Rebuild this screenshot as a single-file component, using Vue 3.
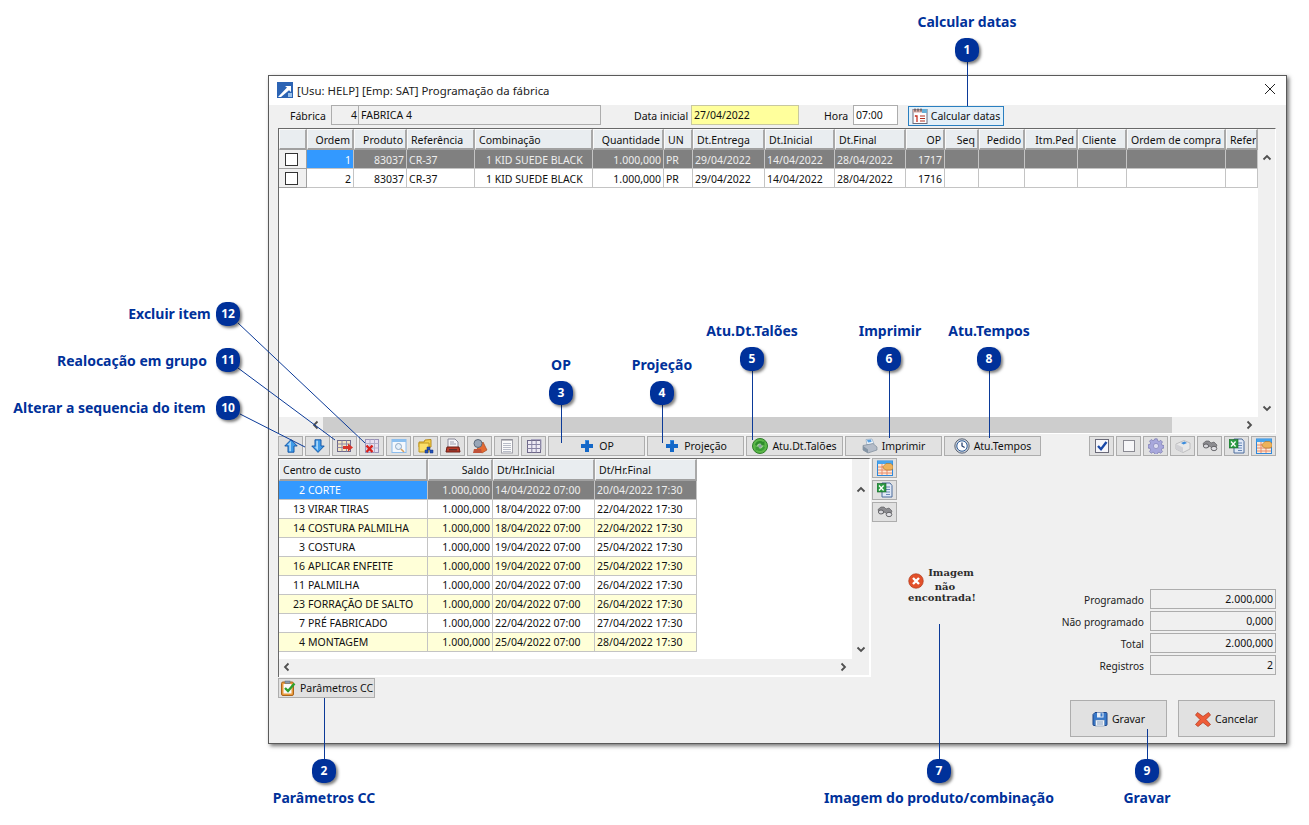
<script setup>
const callouts = [
  { n: 1, x: 967, y: 50 }, { n: 2, x: 324, y: 771 }, { n: 3, x: 561, y: 393 }, { n: 4, x: 662, y: 393 },
  { n: 5, x: 752, y: 359 }, { n: 6, x: 889, y: 359 }, { n: 7, x: 939, y: 771 }, { n: 8, x: 989, y: 359 },
  { n: 9, x: 1147, y: 771 }, { n: 10, x: 228, y: 408 }, { n: 11, x: 228, y: 360 }, { n: 12, x: 228, y: 314 }
]
const labels = [
  { t: 'Calcular datas', x: 967, y: 22 }, { t: 'Parâmetros CC', x: 324, y: 798 }, { t: 'OP', x: 561, y: 365 },
  { t: 'Projeção', x: 662, y: 365 }, { t: 'Atu.Dt.Talões', x: 752, y: 331 }, { t: 'Imprimir', x: 890, y: 331 },
  { t: 'Atu.Tempos', x: 989, y: 331 }, { t: 'Imagem do produto/combinação', x: 939, y: 798 }, { t: 'Gravar', x: 1147, y: 798 },
  { t: 'Alterar a sequencia do item', x: 109.5, y: 408 }, { t: 'Realocação em grupo', x: 132, y: 361 }, { t: 'Excluir item', x: 169.5, y: 314 }
]
const lines = [
  [967.5, 62, 967.5, 106], [324.5, 698, 324.5, 760], [561.5, 405, 561.5, 443], [662.5, 405, 662.5, 443],
  [752.5, 371, 752.5, 440], [889.5, 371, 889.5, 438], [989.5, 371, 989.5, 438], [939.5, 624, 939.5, 760],
  [1147.5, 729, 1147.5, 760], [240, 414, 305, 447], [238, 368, 335, 440], [238, 323, 365, 443]
]
const topCols = [
  { t: 'Ordem', w: 47, r: 1 }, { t: 'Produto', w: 53, r: 1 }, { t: 'Referência', w: 68 }, { t: 'Combinação', w: 118 },
  { t: 'Quantidade', w: 71, r: 1 }, { t: 'UN', w: 29 }, { t: 'Dt.Entrega', w: 72 }, { t: 'Dt.Inicial', w: 70 },
  { t: 'Dt.Final', w: 71 }, { t: 'OP', w: 39, r: 1 }, { t: 'Seq', w: 34, r: 1 }, { t: 'Pedido', w: 46, r: 1 },
  { t: 'Itm.Ped', w: 53, r: 1 }, { t: 'Cliente', w: 49 }, { t: 'Ordem de compra', w: 99 }, { t: 'Referência', w: 32 }
]
const topRows = [
  ['1', '83037', 'CR-37', '1 KID SUEDE BLACK', '1.000,000', 'PR', '29/04/2022', '14/04/2022', '28/04/2022', '1717', '', '', '', '', '', ''],
  ['2', '83037', 'CR-37', '1 KID SUEDE BLACK', '1.000,000', 'PR', '29/04/2022', '14/04/2022', '28/04/2022', '1716', '', '', '', '', '', '']
]
const lowCols = [
  { t: 'Centro de custo', w: 149 }, { t: 'Saldo', w: 65, r: 1 }, { t: 'Dt/Hr.Inicial', w: 102 }, { t: 'Dt/Hr.Final', w: 102 }
]
const lowRows = [
  ['2', 'CORTE', '14/04/2022 07:00', '20/04/2022 17:30'],
  ['13', 'VIRAR TIRAS', '18/04/2022 07:00', '22/04/2022 17:30'],
  ['14', 'COSTURA PALMILHA', '18/04/2022 07:00', '22/04/2022 17:30'],
  ['3', 'COSTURA', '19/04/2022 07:00', '25/04/2022 17:30'],
  ['16', 'APLICAR ENFEITE', '19/04/2022 07:00', '25/04/2022 17:30'],
  ['11', 'PALMILHA', '20/04/2022 07:00', '26/04/2022 17:30'],
  ['23', 'FORRAÇÃO DE SALTO', '20/04/2022 07:00', '26/04/2022 17:30'],
  ['7', 'PRÉ FABRICADO', '22/04/2022 07:00', '27/04/2022 17:30'],
  ['4', 'MONTAGEM', '25/04/2022 07:00', '28/04/2022 17:30']
]
const toolA = ['up', 'down', 'gridmove', 'griddel', 'winsearch', 'folder', 'docprint', 'tools', 'note', 'gridgray']
const toolB = [
  { t: 'OP', i: 'plus' }, { t: 'Projeção', i: 'plus' }, { t: 'Atu.Dt.Talões', i: 'recycle' },
  { t: 'Imprimir', i: 'printer' }, { t: 'Atu.Tempos', i: 'clock' }
]
const toolC = ['checked', 'unchecked', 'gear', 'box', 'binoc', 'excel', 'calhand']
const sideIcons = ['calhand', 'excel', 'binoc']
const totals = [
  { l: 'Programado', v: '2.000,000' }, { l: 'Não programado', v: '0,000' },
  { l: 'Total', v: '2.000,000' }, { l: 'Registros', v: '2' }
]
const tplTop = topCols.map(c => c.w + 'px').join(' ')
const tplLow = lowCols.map(c => c.w + 'px').join(' ')
</script>

<template>
  <div class="canvas">
    <svg class="defs" width="0" height="0">
      <defs>
        <symbol id="up" viewBox="-1 -1 18 18"><path d="M8 .8 15 8h-3.600v7H4.600V8H1z" fill="#3f9be8" stroke="#0f4fa0"/><path d="M8 2.500 4 7h2v7h2z" fill="#a6d5f8"/></symbol>
        <symbol id="down" viewBox="-1 -1 18 18"><path d="M8 15.200 15 8h-3.600V1H4.600v7H1z" fill="#3f9be8" stroke="#0f4fa0"/><path d="M6 2h2v11L4.500 9H6z" fill="#a6d5f8"/></symbol>
        <symbol id="gridmove" viewBox="0 0 16 16"><rect x=".5" y="2.500" width="13" height="11" fill="#f3e6c4" stroke="#6f6a8a"/><path d="M.5 6h13M.5 9.500h13M5 2.500v11M9.500 2.500v11" stroke="#8d88a8"/><path d="M6 8h5V5.500L16 9.500l-5 4V11H6z" fill="#d8342a"/></symbol>
        <symbol id="griddel" viewBox="0 0 16 16"><rect x="1.500" y="1.500" width="13" height="13" fill="#e6dff0" stroke="#9a94b8"/><path d="M1.500 5.500h13M1.500 10h13M6 1.500v13M10.500 1.500v13" stroke="#b3adc8"/><path d="m2.500 7.500 6 6.500M8.500 7.500l-6 6.500" stroke="#d8201a" stroke-width="2.400"/></symbol>
        <symbol id="winsearch" viewBox="0 0 16 16"><rect x="1" y="1.500" width="14" height="13" fill="#f4f8fd" stroke="#8cbcec"/><rect x="1" y="1.500" width="14" height="2.500" fill="#8cc0f0"/><circle cx="7.500" cy="8.500" r="3" fill="#e4f0fb" stroke="#8fa8c4"/><path d="m10 11 3 3" stroke="#d8a060" stroke-width="1.600"/></symbol>
        <symbol id="folder" viewBox="0 0 16 16"><path d="M1 4h5l1-2 6-.5V9H1z" fill="#f6d24c" stroke="#b88c1c"/><path d="M1 5h10v9H1z" fill="#fbdf6a" stroke="#c09820"/><path d="M9 9h3v3H9zM12 12h3v3h-3zM7 12h3v3H7z" fill="#2452b8" stroke="#123080" stroke-width=".5"/></symbol>
        <symbol id="docprint" viewBox="0 0 16 16"><path d="M3 1h7l3 3v6H3z" fill="#f4f4f8" stroke="#8a8a9a"/><path d="M5 4h4M5 6h6" stroke="#a0a0b0"/><path d="M2 9h12l1 5H1z" fill="#b83a28" stroke="#6a1c14"/><rect x="4" y="11" width="8" height="1.500" fill="#5a3030"/></symbol>
        <symbol id="tools" viewBox="0 0 16 16"><path d="m5 11 6-7 4 8-5 3z" fill="#e46a32" stroke="#984018" stroke-width=".6"/><circle cx="6" cy="5.500" r="4" fill="#98a6b8" stroke="#5a6878"/><path d="M2 11h7l1 4H1z" fill="#c0523a"/></symbol>
        <symbol id="note" viewBox="0 0 16 16"><rect x="2.500" y="1.500" width="11" height="13.500" fill="#fbfbfb" stroke="#a0a0a8"/><path d="M4 1v2M6 1v2M8 1v2M10 1v2M12 1v2" stroke="#80808a"/><path d="M4 5.500h8M4 7.500h8M4 9.500h8M4 11.500h8M4 13.500h8" stroke="#b8bcc8"/></symbol>
        <symbol id="gridgray" viewBox="0 0 16 16"><rect x="1.500" y="2.500" width="13" height="12" fill="#eeeaf4" stroke="#6e6888"/><path d="M1.500 6.500h13M1.500 10.500h13M5.800 2.500v12M10.200 2.500v12" stroke="#8884a4"/><path d="M5 1.500h10v10" fill="none" stroke="#a8a4c0"/></symbol>
        <symbol id="plus" viewBox="0 0 16 16"><path d="M6 2h4v4h4v4h-4v4H6v-4H2V6h4z" fill="#1468c8"/><path d="M6 2h4v1H7v3H2V6h4z" fill="#3a8ce0"/></symbol>
        <symbol id="recycle" viewBox="0 0 16 16"><circle cx="8" cy="8" r="7.500" fill="#5cb848" stroke="#2e7d2a"/><circle cx="8" cy="8" r="3.600" fill="#aee09c"/><path d="M3 7a5 5 0 0 1 8-3l1.500-1v4.500H8l1.500-1.500A3 3 0 0 0 5 8z" fill="#2e8c2c"/><path d="M13 9a5 5 0 0 1-8 3l-1.500 1V8.500H8L6.500 10A3 3 0 0 0 11 8z" fill="#3a9c36"/><circle cx="8" cy="8" r="1.800" fill="#8a9aa0"/></symbol>
        <symbol id="printer" viewBox="0 0 16 16"><path d="M4 1.500 10 1l2 5-7 1z" fill="#f4f8fc" stroke="#7c9ab8" stroke-width=".6"/><path d="M1 7.500 11 5.500l4 3.500v3L6 15l-5-3z" fill="#b4bcc8" stroke="#70808e" stroke-width=".6"/><path d="m1 8 5 3.500V15l-5-3z" fill="#8494a4"/><path d="M5 2 9 1.500l.6 2.500-3.600.5z" fill="#5aa0e0"/></symbol>
        <symbol id="clock" viewBox="0 0 16 16"><circle cx="8" cy="8" r="7.200" fill="#c9ced8" stroke="#5e6878"/><circle cx="8" cy="8" r="5.200" fill="#fdfdff" stroke="#2c5c98"/><path d="M8 4.500V8l2.600 1.500" fill="none" stroke="#1c3868" stroke-width="1.200"/></symbol>
        <symbol id="checked" viewBox="0 0 16 16"><rect x="1.500" y="1.500" width="13" height="13" fill="#f6f6fa" stroke="#6a6a78"/><path d="m4 8 3 3.200L12.500 4" fill="none" stroke="#1848a8" stroke-width="2.400"/></symbol>
        <symbol id="unchecked" viewBox="0 0 16 16"><rect x="2.500" y="2.500" width="11" height="11" fill="#f6f6f8" stroke="#8a8a92"/></symbol>
        <symbol id="gear" viewBox="0 0 16 16"><path d="M6.800.8h2.400l.4 2 1.500.6 1.700-1.100 1.700 1.700-1.100 1.700.6 1.500 2 .4v2.400l-2 .4-.6 1.500 1.100 1.700-1.700 1.700-1.700-1.100-1.500.6-.4 2H6.800l-.4-2-1.500-.6-1.700 1.100-1.700-1.700 1.100-1.700-.6-1.500-2-.4V6.800l2-.4.6-1.500-1.100-1.700 1.700-1.700 1.700 1.100 1.500-.6z" fill="#a8a8dc" stroke="#6e6ea8" stroke-width=".6"/><circle cx="8" cy="8" r="2.600" fill="#dcdcf0" stroke="#7a7ab0" stroke-width=".6"/></symbol>
        <symbol id="box" viewBox="0 0 16 16"><path d="m1 6 8-3.500L15 5v6l-7 3.500L1 11z" fill="#e8e8e8" stroke="#a4a4a8" stroke-width=".6"/><path d="m1 6 7 3.500V14.500L1 11z" fill="#d0d0d4"/><path d="m6 5 3.500-1.500L12 5 8.500 6.500z" fill="#3c8cdc"/></symbol>
        <symbol id="binoc" viewBox="0 0 16 16"><path d="M1 5.500 4 3h3l2 2 3-1 3 3-1.500 3.500H10L8 8 5.500 9.500 2 8.500z" fill="#8c8c90" stroke="#505054" stroke-width=".6"/><ellipse cx="4" cy="8" rx="2.600" ry="2" fill="#d8d8dc" stroke="#4c4c50" stroke-width=".8"/><ellipse cx="12" cy="10.500" rx="2.800" ry="2.200" fill="#e0e0e4" stroke="#4c4c50" stroke-width=".8"/></symbol>
        <symbol id="excel" viewBox="0 0 16 16"><path d="M5 1h8l2 2.500V15H5z" fill="#dfe8f6" stroke="#4c6c9c"/><path d="M9 5h4M9 7.500h4M9 10h4M9 12.500h4" stroke="#6888b8"/><rect x="0" y="1.500" width="9" height="8.500" fill="#2c9c44" stroke="#186028" stroke-width=".6"/><path d="m2 3.500 4.600 5M6.600 3.500 2 8.500" stroke="#fff" stroke-width="1.300"/></symbol>
        <symbol id="calhand" viewBox="0 0 16 16"><rect x=".5" y="1" width="15" height="14.500" fill="#fbe9d8" stroke="#2c88dc"/><rect x=".5" y="1" width="15" height="3" fill="#48a4ec"/><path d="M1 7h14M1 10h14M1 13h14M5 4v11M10 4v11" stroke="#e88a6a"/><path d="M6 6.500 9 3.500h4.500l2.500 2v3.500l-3 1H9L6.500 8.500z" fill="#eeb25a" stroke="#a87428" stroke-width=".6"/></symbol>
        <symbol id="cal" viewBox="0 0 16 16"><rect x="1" y="1.500" width="14" height="14" fill="#fdfdff" stroke="#6a6a7a"/><rect x="1" y="1.500" width="14" height="3" fill="#d8a8a0"/><path d="M3 .5v3M6 .5v3M9 .5v3" stroke="#404048"/><rect x="10" y="1" width="5" height="4" fill="#68b0d8"/><path d="M3 8h2v6M3 8.500 4 7.500" fill="none" stroke="#c83020" stroke-width="1.300"/><path d="M8 8h5M8 10.500h5M8 13h5" stroke="#b03020"/></symbol>
        <symbol id="clip" viewBox="0 0 16 16"><rect x="1.500" y="2" width="12" height="13.500" rx="1.500" fill="#e99a3c" stroke="#a8641c"/><rect x="3.500" y="4" width="8" height="9.500" fill="#fafafa"/><rect x="5" y="1" width="5" height="2.500" fill="#8a98a8" stroke="#586878" stroke-width=".5"/><path d="m5 8 3 3 6.500-7.500" fill="none" stroke="#2ea02e" stroke-width="2.400"/></symbol>
        <symbol id="save" viewBox="0 0 16 16"><path d="M1 3.500 3 1.500h11a1 1 0 0 1 1 1v11a1 1 0 0 1-1 1H2a1 1 0 0 1-1-1z" fill="#3878c8" stroke="#1c4488"/><rect x="5" y="1.500" width="6.500" height="5" fill="#e8eef6"/><rect x="8.500" y="2.200" width="2" height="3.400" fill="#3878c8"/><rect x="3.500" y="9" width="9" height="6" fill="#f0f4f8" stroke="#6080a8" stroke-width=".5"/><path d="M5 11h6M5 13h6" stroke="#88a0c0"/></symbol>
        <symbol id="cancel" viewBox="0 0 16 16"><path d="M2.500 1.500 8 5.500l5.500-4L15.500 4 11 8.500l4.500 5-2.500 2L8 11.500l-5 4-2.500-2L5 8.500.5 4z" fill="#ee5c38" stroke="#b03418" stroke-width=".7"/></symbol>
        <symbol id="err" viewBox="0 0 16 16"><circle cx="8" cy="8" r="7.300" fill="#e2502a" stroke="#a83214" stroke-width=".6"/><path d="m5 5 6 6M11 5l-6 6" stroke="#fff" stroke-width="2.400"/></symbol>
        <symbol id="appicon" viewBox="0 0 16 16"><rect width="16" height="16" fill="#2c64b4"/><path d="M1 15 10 5.500 8 4h6v6l-2-1.800L4 15z" fill="#fff"/><rect x="11" y="11" width="4" height="4" fill="#9ac0e8"/></symbol>
      </defs>
    </svg>

    <section class="win">
      <header class="title">
        <svg class="i16"><use href="#appicon" /></svg>
        <span>[Usu: HELP] [Emp: SAT] Programação da fábrica</span>
        <svg class="close" viewBox="0 0 12 12"><path d="m1 1 10 10M11 1 1 11" stroke="#222" fill="none" /></svg>
      </header>

      <div class="body">
        <div class="form">
          <label class="l-fab">Fábrica</label>
          <div class="box code">4</div>
          <div class="box name">FABRICA 4</div>
          <label class="l-date">Data inicial</label>
          <div class="box date">27/04/2022</div>
          <label class="l-hora">Hora</label>
          <div class="box hora">07:00</div>
          <button class="btn calc"><svg class="i16"><use href="#cal" /></svg>Calcular datas</button>
        </div>

        <div class="grid top">
          <div class="g-main">
            <div class="row head" :style="{ gridTemplateColumns: '28px ' + tplTop }">
              <div class="cell hc"></div>
              <div v-for="c in topCols" :key="c.t + c.w" class="cell hc" :class="{ r: c.r }">{{ c.t }}</div>
            </div>
            <div v-for="(row, ri) in topRows" :key="ri" class="row" :style="{ gridTemplateColumns: '28px ' + tplTop }" :class="{ sel: ri === 0 }">
              <div class="cell chk"><span class="cb"></span></div>
              <div v-for="(v, i) in row" :key="i" class="cell dt" :class="{ r: topCols[i].r, first: i === 0, combo: i === 3 }">{{ v }}</div>
            </div>
          </div>
          <div class="vs">
            <svg class="chev" viewBox="0 0 10 10"><path d="m1.500 6.500 3.500-3.500 3.500 3.500" /></svg>
            <svg class="chev" viewBox="0 0 10 10"><path d="m1.500 3.500 3.500 3.500 3.500-3.500" /></svg>
          </div>
          <div class="hs">
            <div class="hs-left"><svg class="chev" viewBox="0 0 10 10"><path d="M6.500 1.500 3 5l3.500 3.500" /></svg></div>
            <div class="thumb"></div>
            <div class="hs-right"><svg class="chev" viewBox="0 0 10 10"><path d="M3.500 1.500 7 5 3.500 8.500" /></svg></div>
          </div>
        </div>

        <div class="toolbar">
          <div class="tset">
            <button v-for="i in toolA" :key="i" class="btn ic"><svg class="i16"><use :href="'#' + i" /></svg></button>
          </div>
          <div class="tset">
            <button v-for="b in toolB" :key="b.t" class="btn tb"><svg class="i16"><use :href="'#' + b.i" /></svg>{{ b.t }}</button>
          </div>
          <div class="tset end">
            <button v-for="i in toolC" :key="i" class="btn ic"><svg class="i16"><use :href="'#' + i" /></svg></button>
          </div>
        </div>

        <div class="lower">
          <div class="left">
            <div class="grid low">
              <div class="g-main">
                <div class="row head lowhead" :style="{ gridTemplateColumns: tplLow }">
                  <div v-for="c in lowCols" :key="c.t" class="cell hc" :class="{ r: c.r }">{{ c.t }}</div>
                </div>
                <div v-for="(row, ri) in lowRows" :key="ri" class="row" :style="{ gridTemplateColumns: tplLow }" :class="{ sel: ri === 0, zebra: ri % 2 === 0 && ri > 0 || ri === 8 }">
                  <div class="cell first cc"><span class="num">{{ row[0] }}</span>{{ row[1] }}</div>
                  <div class="cell r">1.000,000</div>
                  <div class="cell">{{ row[2] }}</div>
                  <div class="cell">{{ row[3] }}</div>
                </div>
              </div>
              <div class="vs">
                <svg class="chev" viewBox="0 0 10 10"><path d="m1.500 6.500 3.500-3.500 3.500 3.500" /></svg>
                <svg class="chev" viewBox="0 0 10 10"><path d="m1.500 3.500 3.500 3.500 3.500-3.500" /></svg>
              </div>
              <div class="hs plain">
                <svg class="chev" viewBox="0 0 10 10"><path d="M6.500 1.500 3 5l3.500 3.500" /></svg>
                <svg class="chev" viewBox="0 0 10 10"><path d="M3.500 1.500 7 5 3.500 8.500" /></svg>
              </div>
            </div>
            <button class="btn param"><svg class="i16"><use href="#clip" /></svg>Parâmetros CC</button>
          </div>

          <div class="right">
            <div class="side">
              <button v-for="i in sideIcons" :key="i" class="btn ic"><svg class="i16"><use :href="'#' + i" /></svg></button>
            </div>
            <div class="info">
              <div class="missing">
                <svg class="i16"><use href="#err" /></svg>
                <div class="mtext"><div class="m1">Imagem</div><div class="m2">não</div><div class="m3">encontrada!</div></div>
              </div>
              <div class="totals">
                <div v-for="t in totals" :key="t.l" class="tot">
                  <span class="tl">{{ t.l }}</span>
                  <span class="box tv">{{ t.v }}</span>
                </div>
              </div>
            </div>
            <div class="actions">
              <button class="btn act"><svg class="i16"><use href="#save" /></svg>Gravar</button>
              <button class="btn act"><svg class="i16"><use href="#cancel" /></svg>Cancelar</button>
            </div>
          </div>
        </div>
      </div>
    </section>

    <svg class="wires" width="1309" height="825">
      <line v-for="(l, i) in lines" :key="i" :x1="l[0]" :y1="l[1]" :x2="l[2]" :y2="l[3]" />
    </svg>
    <div v-for="c in callouts" :key="c.n" class="bubble" :style="{ left: c.x - 12 + 'px', top: c.y - 12 + 'px' }">{{ c.n }}</div>
    <div v-for="l in labels" :key="l.t" class="caption" :style="{ left: l.x + 'px', top: l.y + 'px' }">{{ l.t }}</div>
  </div>
</template>

<style scoped>
.canvas { position: relative; width: 1309px; height: 825px; background: #fff; overflow: hidden; font-family: "Noto Sans", "Liberation Sans", sans-serif; font-size: 10.5px; color: #111; }
.defs { position: absolute; }
.i16 { width: 16px; height: 16px; flex: none; }

.win { position: absolute; left: 268px; top: 75px; width: 1019px; height: 669px; box-sizing: border-box; border: 1px solid #5a5a5a; background: #f0f0f0; box-shadow: 2px 2px 4px rgba(0,0,0,.55); display: flex; flex-direction: column; }
.title { height: 29px; flex: none; background: #fff; display: flex; align-items: center; gap: 4px; padding-left: 8px; padding-bottom: 1px; font-size: 11.400px; color: #222; position: relative; box-sizing: border-box; }
.close { position: absolute; right: 10px; top: 7px; width: 12px; height: 12px; }
.body { flex: 1; padding: 0 10px 0 9px; display: flex; flex-direction: column; min-height: 0; }

.form { height: 23px; flex: none; display: flex; align-items: flex-start; }
.form label { line-height: 22px; }
.box { box-sizing: border-box; height: 20px; line-height: 19px; border: 1px solid #adadad; background: #f0f0f0; padding: 0 2px; }
.l-fab { margin-left: 12px; width: 41px; }
.code { width: 28px; text-align: right; padding-right: 1px; }
.name { width: 243px; margin-left: -1px; }
.l-date { margin-left: 33px; width: 57px; }
.date { width: 108px; background: #ffff9c; border-color: #c8c8a0; }
.l-hora { margin-left: 25px; width: 29px; }
.hora { width: 45px; background: #fff; }
.btn { box-sizing: border-box; border: 1px solid #adadad; background: #e1e1e1; font: inherit; color: #111; padding: 0; margin: 0; display: flex; align-items: center; justify-content: center; gap: 3px; white-space: nowrap; }
.calc { margin: 1px 0 0 10px; width: 96px; height: 20px; border-color: #2a7fc0; background: #e4f0f8; }

.grid { flex: none; display: grid; grid-template-columns: 1fr 17px; grid-template-rows: 1fr 16px; box-sizing: border-box; border-left: 1px solid #696969; border-top: 1px solid #696969; background: #fff; }
.grid.top { height: 306px; width: 998px; border-right: 1px solid #fff; border-bottom: 1px solid #fff; }
.g-main { overflow: hidden; min-width: 0; background: #fff; }
.row { display: grid; height: 19px; }
.head { height: 21px; }
.lowhead { height: 22px; }
.cell { box-sizing: border-box; border-right: 1px solid #c4c4c4; border-bottom: 1px solid #c4c4c4; padding: 0 2px; line-height: 18px; white-space: nowrap; overflow: hidden; }
.cell.r { text-align: right; }
.dt { padding-top: 1px; }
.hc { background: #e9edf0; padding: 1px 3px 0; border-right: 2px solid #a9a9a9; border-bottom: 2px solid #a0a0a0; border-left: 1px solid #fafafa; border-top: 1px solid #fafafa; }
.hc.r { padding-right: 2px; }
.chk { background: #f0f0f0; border-right: 1px solid #a0a0a0; border-bottom: 1px solid #a0a0a0; display: flex; align-items: center; justify-content: center; padding: 1px 3px 0 0; }
.cb { width: 13px; height: 13px; box-sizing: border-box; border: 1px solid #333; background: #fff; }
.combo { padding-left: 11px; }
.sel .cell:not(.chk) { background: #808080; color: #eee; }
.sel .cell.first { background: #3399ff; color: #fff; }
.zebra .cell { background: #ffffd8; }
.cc { padding: 0; }
.num { display: inline-block; width: 26px; text-align: right; margin-right: 3px; }
.vs { background: #f0f0f0; display: flex; flex-direction: column; justify-content: space-between; align-items: center; padding: 24px 0 4px; box-sizing: border-box; }
.chev { width: 10px; height: 10px; }
.chev path { fill: none; stroke: #505050; stroke-width: 1.800; }
.hs { grid-column: 1 / 3; background: #f0f0f0; display: flex; align-items: center; }
.hs-left { width: 44px; display: flex; justify-content: flex-end; box-sizing: border-box; padding-right: 2px; }
.thumb { width: 849px; height: 16px; background: #cdcdcd; }
.hs-right { flex: 1; display: flex; justify-content: flex-end; padding-right: 21px; box-sizing: border-box; }
.plain { justify-content: space-between; padding: 0 21px 0 3px; margin-bottom: 2px; }

.toolbar { flex: none; margin-top: 2px; height: 20px; display: flex; }
.tset { display: flex; gap: 2px; }
.tset.end { margin-left: auto; margin-right: 0; }
.ic { width: 25px; height: 20px; }
.tb { width: 97px; height: 20px; }
.tset:nth-child(2) { margin-left: 2px; }
.tb .i16 { margin-right: 1px; }

.lower { flex: 1; margin-top: 2px; display: flex; min-height: 0; }
.left { width: 593px; flex: none; }
.grid.low { height: 219px; width: 593px; grid-template-rows: 1fr 18px; border-right: 2px solid #fff; }
.low .vs { padding: 26px 0 5px; }
.param { width: 97px; height: 20px; margin-top: 1px; gap: 4px; }
.right { flex: 1; padding-left: 1px; display: flex; flex-direction: column; }
.side { display: flex; flex-direction: column; gap: 2px; flex: none; }
.info { flex: none; margin-top: 45px; display: flex; }
.missing { width: 168px; padding: 6px 0 0 36px; box-sizing: border-box; display: flex; align-items: flex-start; }
.mtext { font: bold 10px/11px "DejaVu Serif", serif; text-align: center; color: #2c2c2c; margin-left: -16px; margin-top: -6px; width: 68px; }
.m1 { padding-left: 18px; margin-bottom: 3px; }
.m2 { padding-left: 6px; margin-top: 0; }
.totals { flex: 1; margin-top: 22px; display: flex; flex-direction: column; gap: 2px; }
.tot { display: flex; align-items: center; justify-content: flex-end; gap: 6px; }
.tl { color: #222; font-size: 10.200px; padding-top: 2px; }
.tv { width: 126px; text-align: right; padding-right: 2px; }
.actions { flex: none; margin-top: 25px; display: flex; justify-content: flex-end; gap: 11px; padding-right: 1px; }
.act { width: 97px; height: 37px; gap: 4px; }

.wires { position: absolute; left: 0; top: 0; pointer-events: none; }
.wires line { stroke: #0b3a98; stroke-width: 1; }
.bubble { position: absolute; width: 24px; height: 24px; border-radius: 10px; background: #00319a; color: #fff; font: bold 12px/24px "Noto Sans", sans-serif; text-align: center; box-shadow: 2px 2px 3px rgba(0,0,0,.5); }
.caption { position: absolute; transform: translate(-50%, -50%); white-space: nowrap; color: #00319a; font: bold 14px/18px "Noto Sans", sans-serif; }
</style>
